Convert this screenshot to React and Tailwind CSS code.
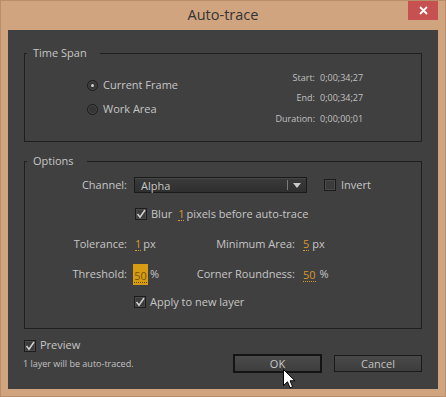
import React from 'react';

const Check = ({ checked }) => (
  <span className="w-[12px] h-[12px] border border-[#1c1c1c] bg-[#3b3b3b] shadow-[inset_0_0_0_1px_#4a4a4a] flex items-center justify-center shrink-0">
    {checked && (
      <svg width="10" height="10" viewBox="0 0 10 10">
        <path d="M1.5 5 L4 8.2 L9 1" stroke="#d2d2d2" strokeWidth="1.5" fill="none" />
      </svg>
    )}
  </span>
);

const Radio = ({ checked }) => (
  <span className="w-[11px] h-[11px] rounded-full border border-[#1c1c1c] bg-[#363636] shadow-[inset_0_0_0_1px_#474747] flex items-center justify-center shrink-0">
    {checked && <span className="w-[3px] h-[3px] rounded-full bg-[#d0d0d0]" />}
  </span>
);

const Val = ({ children }) => (
  <span className="inline-block text-[#d69a2a] border-b border-dotted border-[#d69a2a] leading-[13px]">{children}</span>
);

const Legend = ({ children }) => (
  <legend className="ml-[2px] pl-[6px] pr-[13px] leading-[16px] text-[#c6c6c6]">{children}</legend>
);

const App = () => {
  return (
    <div className="w-[446px] h-[397px] bg-[#cfa47f] border border-[#b98f6b] flex flex-col font-['Open_Sans',sans-serif] text-[11px] text-[#c6c6c6] select-none">
      {/* title bar */}
      <div className="grid grid-cols-[1fr_auto_1fr] h-[29px] shrink-0">
        <div />
        <div className="self-center text-[14.5px] text-[#333] pb-[1px]">Auto-trace</div>
        <div className="justify-self-end mr-[7px] w-[30px] h-[19px] bg-[#c75050] flex items-center justify-center">
          <svg width="9" height="9" viewBox="0 0 9 9">
            <path d="M1 1 L8 8 M8 1 L1 8" stroke="#fff" strokeWidth="1.8" />
          </svg>
        </div>
      </div>

      {/* panel */}
      <div className="mx-[7px] flex-1 mb-[7px] bg-[#404040] px-[16px] pt-[15px] flex flex-col">
        <fieldset className="border border-[#1f1f1f] h-[97px] min-w-0">
          <Legend>Time Span</Legend>
          <div className="flex items-start">
            <div className="w-[200px] pl-[62px] mt-[12px] flex flex-col">
              <div className="h-[24px] flex items-center gap-[5px]">
                <Radio checked />
                <span>Current Frame</span>
              </div>
              <div className="h-[24px] flex items-center gap-[5px]">
                <Radio />
                <span>Work Area</span>
              </div>
            </div>
            <div className="mt-[6px] grid grid-cols-[90px_auto] gap-x-[5px] auto-rows-[20.5px] items-center text-[9px] text-[#c0c0c0]">
              <span className="text-right">Start:</span>
              <span>0;00;34;27</span>
              <span className="text-right">End:</span>
              <span>0;00;34;27</span>
              <span className="text-right">Duration:</span>
              <span>0;00;00;01</span>
            </div>
          </div>
        </fieldset>

        <fieldset className="mt-[11px] border border-[#1f1f1f] h-[176px] min-w-0">
          <Legend>Options</Legend>

          {/* channel */}
          <div className="mt-[8px] h-[16px] flex items-center">
            <span className="w-[102px] text-right">Channel:</span>
            <div className="ml-[7px] w-[173px] h-[16px] border border-[#1a1a1a] bg-gradient-to-b from-[#3a3a3a] to-[#2f2f2f] shadow-[inset_0_1px_0_#474747] flex items-center">
              <span className="pl-[6px] flex-1 leading-none">Alpha</span>
              <span className="w-px h-[10px] bg-[#7a7a7a]" />
              <svg className="mx-[5px]" width="8" height="5" viewBox="0 0 8 5">
                <path d="M0 0 L8 0 L4 5 Z" fill="#c8c8c8" />
              </svg>
            </div>
            <span className="ml-[17px]">
              <Check />
            </span>
            <span className="ml-[5px]">Invert</span>
          </div>

          {/* blur */}
          <div className="mt-[11px] h-[20px] flex items-center pl-[110px]">
            <Check checked />
            <span className="ml-[4px]">Blur</span>
            <span className="ml-[6px]"><Val>1</Val></span>
            <span className="ml-[2px]">pixels before auto-trace</span>
          </div>

          {/* tolerance */}
          <div className="mt-[10px] h-[20px] grid grid-cols-[102px_60px_108px_auto] items-center">
            <span className="text-right">Tolerance:</span>
            <span className="pl-[8px] flex items-center gap-[2px]"><Val>1</Val><span>px</span></span>
            <span className="text-right">Minimum Area:</span>
            <span className="pl-[8px] flex items-center gap-[3px]"><Val>5</Val><span>px</span></span>
          </div>

          {/* threshold */}
          <div className="mt-[10px] h-[21px] grid grid-cols-[102px_60px_108px_auto] items-center">
            <span className="text-right">Threshold:</span>
            <span className="pl-[6px] flex items-center gap-[2px]">
              <span className="w-[15px] h-[21px] bg-[#d69c12] flex items-center justify-center">
                <span className="inline-block text-[#7a5200] border-b border-dotted border-[#6a4700] leading-[13px] mt-[2px]">50</span>
              </span>
              <span>%</span>
            </span>
            <span className="text-right">Corner Roundness:</span>
            <span className="pl-[8px] flex items-center gap-[4px]"><Val>50</Val><span>%</span></span>
          </div>

          {/* apply */}
          <div className="mt-[7px] h-[20px] flex items-center pl-[109px]">
            <Check checked />
            <span className="ml-[4px]">Apply to new layer</span>
          </div>
        </fieldset>

        {/* bottom */}
        <div className="mt-[8px] h-[17px] flex items-center">
          <Check checked />
          <span className="ml-[4px]">Preview</span>
        </div>
        <div className="h-[19px] flex items-center">
          <span className="-ml-px text-[9px] text-[#c0c0c0] flex-1">1 layer will be auto-traced.</span>
          <button className="relative w-[89px] h-[19px] border-2 border-[#141414] bg-gradient-to-b from-[#4b4b4b] to-[#3d3d3d] text-[#c8c8c8] text-[11px] leading-none">
            OK
            <svg className="absolute left-[48px] top-[13px]" width="13" height="20" viewBox="0 0 13 20">
              <path d="M0.5 0.5 L0.5 16.5 L4.5 12.8 L7 18.8 L9.6 17.7 L7.1 11.8 L12 11.8 Z" fill="#fff" stroke="#000" strokeWidth="1" strokeLinejoin="round" />
            </svg>
          </button>
          <button className="ml-[12px] w-[88px] h-[17px] border border-[#1a1a1a] bg-gradient-to-b from-[#494949] to-[#3d3d3d] text-[#c0c0c0] text-[11px] leading-none">
            Cancel
          </button>
        </div>
      </div>
    </div>
  );
};

export default App;
